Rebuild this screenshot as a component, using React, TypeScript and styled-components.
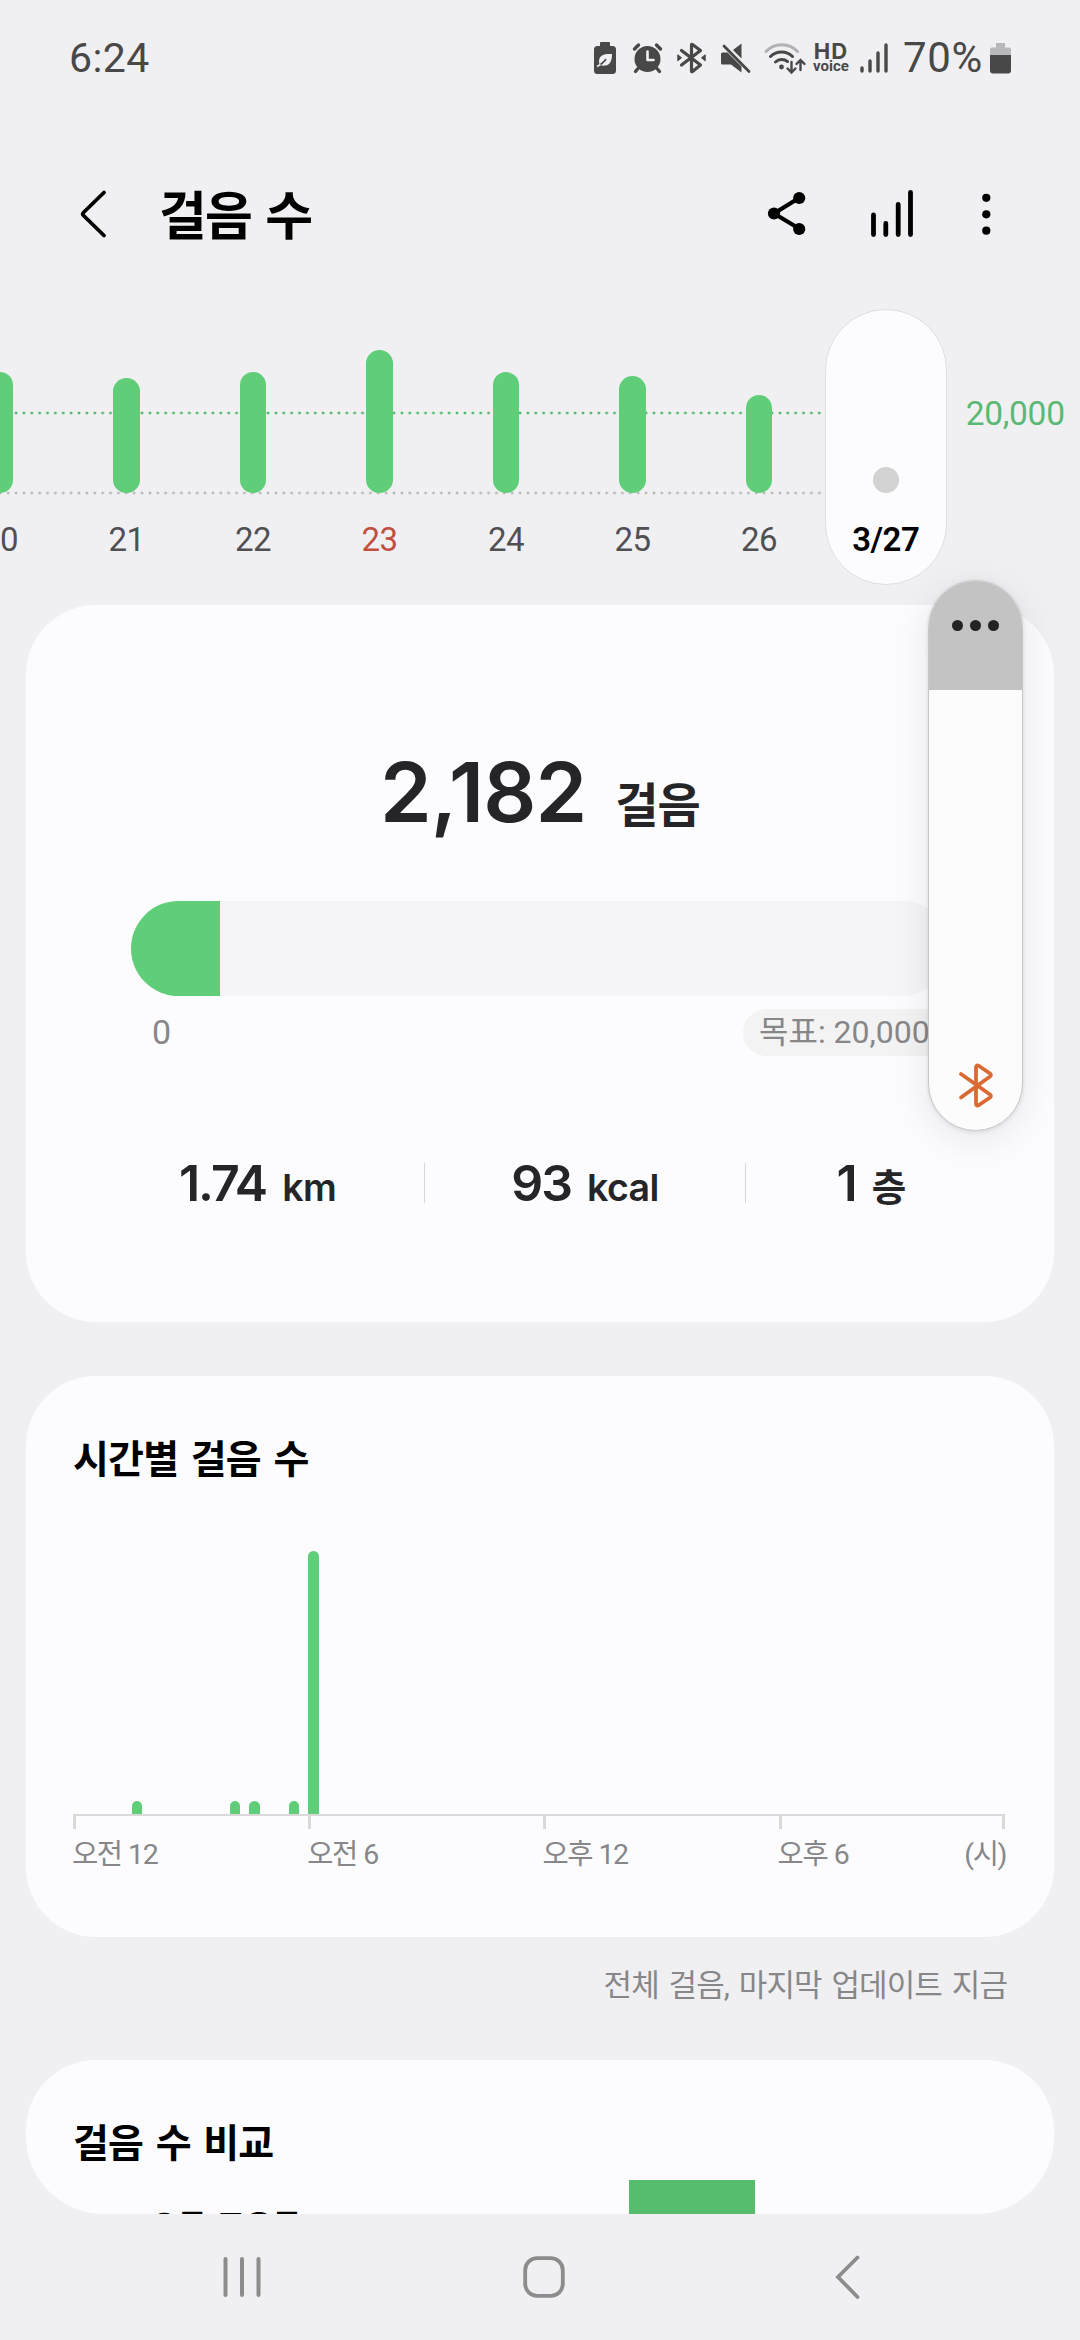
import React from "react";
import styled, { createGlobalStyle } from "styled-components";

const GREEN = "#60ce79";
const INK = "#252528";
const MUTED = "#878789";
const STATUS = "#484848";

const GlobalStyle = createGlobalStyle`
  * { box-sizing: border-box; }
  body { margin: 0; background: #f0f0f3; }
`;

const Screen = styled.div`
  position: relative;
  display: flex;
  flex-direction: column;
  width: 1080px;
  height: 2340px;
  overflow: hidden;
  background: #f0f0f3;
  color: ${INK};
  font-family: Roboto, "Noto Sans CJK KR", sans-serif;
  white-space: nowrap;
`;

const Icon = styled.svg`
  display: block;
  flex: none;
  overflow: visible;
`;

/* ---------- status bar ---------- */

const StatusBar = styled.header`
  display: flex;
  align-items: center;
  height: 116px;
  padding: 0 69px 0 69px;
  color: ${STATUS};
`;

const Clock = styled.span`
  font-size: 41px;
  line-height: 60px;
  letter-spacing: 0.4px;
  margin-right: auto;
`;

const StatusIcons = styled.div`
  display: flex;
  align-items: center;
`;

const Slot = styled.span<{ $gap: number }>`
  display: flex;
  margin-left: ${(p) => p.$gap}px;
`;

const HdVoice = styled.span`
  display: flex;
  flex-direction: column;
  align-items: center;
  width: 34px;
  margin-left: 8px;
  font-weight: 700;
`;

const Hd = styled.span`
  font-family: Inter, sans-serif;
  font-size: 22px;
  line-height: 17px;
  letter-spacing: 1.2px;
`;

const Voice = styled.span`
  font-size: 15px;
  line-height: 13px;
`;

const Percent = styled.span`
  width: 80px;
  margin-left: 15px;
  font-size: 42px;
  line-height: 60px;
  letter-spacing: 0.6px;
`;

/* ---------- title bar ---------- */

const TitleBar = styled.div`
  display: flex;
  align-items: center;
  height: 188px;
  padding: 8px 89px 0 80px;
`;

const PageTitle = styled.h1`
  margin: 5px auto 0 53px;
  color: #000;
  font-family: Inter, "Noto Sans CJK KR", sans-serif;
  font-size: 52px;
  font-weight: 700;
  line-height: 76px;
  letter-spacing: -1.9px;
  word-spacing: 4px;
`;

const Actions = styled.div`
  display: flex;
  align-items: center;
`;

/* ---------- daily strip ---------- */

const DailyChart = styled.section`
  display: flex;
  height: 301px;
  padding-top: 5px;
`;

const dots = (color: string) =>
  `radial-gradient(circle at center, ${color} 0, ${color} 1px, transparent 1.8px)`;

const Strip = styled.div`
  display: flex;
  flex: none;
  height: 276px;
  margin-left: -63.25px;
  background-image: ${dots("#4fba6c")}, ${dots("#b9b9bb")};
  background-size: 7.877px 4px;
  background-repeat: repeat-x;
  background-position: -3.65px 102px, -3.65px 182px;
`;

const Day = styled.div<{ $selected?: boolean }>`
  display: flex;
  flex-direction: column;
  align-items: center;
  width: ${(p) => (p.$selected ? 122 : 126.5)}px;
  height: 276px;
  margin-left: ${(p) => (p.$selected ? 2.5 : 0)}px;
  border: 1px solid ${(p) => (p.$selected ? "#dedee0" : "transparent")};
  border-radius: 61px;
  background: ${(p) => (p.$selected ? "#fcfcfe" : "transparent")};
`;

const BarArea = styled.div`
  display: flex;
  align-items: flex-end;
  height: 183px;
`;

const DayBar = styled.div<{ $empty?: boolean }>`
  width: 26.5px;
  border-radius: 13.25px;
  background: ${(p) => (p.$empty ? "#d2d2d2" : GREEN)};
`;

const DayLabel = styled.span<{ $tone: "day" | "sunday" | "selected" }>`
  margin-top: 26px;
  color: ${(p) =>
    p.$tone === "sunday" ? "#c2503f" : p.$tone === "selected" ? "#000" : "#505053"};
  font-size: 33px;
  font-weight: ${(p) => (p.$tone === "selected" ? 600 : 400)};
  line-height: 42px;
  letter-spacing: -0.5px;
`;

const GoalTick = styled.span`
  margin: 84px 0 0 19px;
  color: #5bb976;
  font-size: 33.5px;
  line-height: 42px;
  letter-spacing: -0.3px;
`;

/* ---------- cards ---------- */

const Card = styled.section<{ $height: number }>`
  flex: none;
  width: 1028px;
  height: ${(p) => p.$height}px;
  margin: 0 26px;
  border-radius: 70px;
  background: #fcfcfe;
  overflow: hidden;
`;

const SummaryCard = styled(Card)`
  padding: 137px 105px 0;
`;

const StepTotal = styled.div`
  display: flex;
  align-items: baseline;
  justify-content: center;
  height: 100px;
  font-family: Inter, "Noto Sans CJK KR", sans-serif;
  font-weight: 600;
  line-height: 100px;
`;

const StepCount = styled.span`
  font-size: 83px;
  letter-spacing: -0.9px;
`;

const StepUnit = styled.span`
  margin-left: 29px;
  font-size: 47px;
  letter-spacing: -0.9px;
`;

const Track = styled.div`
  height: 95px;
  margin-top: 59px;
  border-radius: 47.5px;
  background: #f5f5f8;
  overflow: hidden;
`;

const Fill = styled.div`
  height: 100%;
  background: ${GREEN};
`;

const Range = styled.div`
  display: flex;
  justify-content: space-between;
  height: 47px;
  margin-top: 13px;
  padding-left: 21px;
  color: ${MUTED};
  font-size: 34px;
  line-height: 47px;
`;

const GoalChip = styled.span`
  width: 206px;
  padding-left: 16px;
  border-radius: 24px;
  background: #f3f3f3;
  font-size: 32px;
`;

const Metrics = styled.div`
  display: grid;
  grid-template-columns: 334px 321px 250px;
  align-items: center;
  height: 80px;
  margin: 87px 0 0 -40px;
  font-family: Inter, "Noto Sans CJK KR", sans-serif;
  font-weight: 600;
`;

const Metric = styled.div<{ $divided?: boolean }>`
  display: flex;
  align-items: center;
  justify-content: center;
  height: 40px;
  border-right: ${(p) => (p.$divided ? "1px solid #d6d6d8" : "0")};
`;

const MetricText = styled.span`
  display: flex;
  align-items: baseline;
  padding-top: 4px;
  line-height: 80px;
`;

const MetricValue = styled.span`
  font-size: 50px;
  letter-spacing: -2px;
`;

const MetricUnit = styled.span`
  margin-left: 16px;
  font-size: 37.5px;
  letter-spacing: -0.6px;
`;

const TitledCard = styled(Card)`
  margin-top: 54px;
  padding: 53px 49px 0 47px;
`;

const CardTitle = styled.h2`
  margin: 0;
  padding-bottom: 2px;
  color: #000;
  font-family: Inter, "Noto Sans CJK KR", sans-serif;
  font-size: 39px;
  font-weight: 600;
  line-height: 60px;
  letter-spacing: -0.8px;
  word-spacing: 3.5px;
`;

/* ---------- hourly chart ---------- */

const HourPlot = styled.div`
  display: flex;
  align-items: flex-end;
  justify-content: space-between;
  height: 263px;
  margin-top: 60px;
`;

const HourBar = styled.div`
  width: 10.7px;
  border-radius: 5.4px 5.4px 0 0;
  background: ${GREEN};
`;

const Axis = styled.div`
  display: grid;
  grid-template-columns: repeat(3, 235.2px) 1fr;
  height: 15px;
  border-top: 2.5px solid #d9d9da;
  border-right: 3px solid #d9d9da;
`;

const Tick = styled.div`
  border-left: 3px solid #d9d9da;
`;

const HourLabels = styled.div`
  display: grid;
  grid-template-columns: repeat(3, 235.2px) 1fr auto;
  margin: 6px -1px 0 -1px;
  color: ${MUTED};
  font-size: 28.5px;
  line-height: 40px;
  letter-spacing: -1.4px;
  word-spacing: 0.8px;
`;

const Updated = styled.p`
  margin: 29px 73px 0 0;
  color: ${MUTED};
  font-size: 31px;
  line-height: 40px;
  letter-spacing: -0.9px;
  word-spacing: 3px;
  text-align: right;
`;

/* ---------- comparison ---------- */

const CompareCard = styled(TitledCard)`
  border-radius: 70px 70px 78px 78px;
`;

const CompareRow = styled.div`
  display: grid;
  grid-template-columns: 556px 126px;
  height: 100px;
  margin-top: 5px;
`;

const CompareName = styled.span`
  padding: 27px 0 0 77px;
  color: #000;
  font-size: 31px;
  font-weight: 700;
  line-height: 40px;
  letter-spacing: -0.4px;
  word-spacing: 3px;
`;

const CompareBar = styled.div`
  background: #56bc6e;
`;

/* ---------- system navigation ---------- */

const NavBar = styled.nav`
  display: flex;
  align-items: center;
  height: 126px;
  padding-left: 223px;
`;

/* ---------- floating edge panel ---------- */

const EdgePanel = styled.aside`
  position: absolute;
  top: 580px;
  left: 928px;
  display: flex;
  flex-direction: column;
  align-items: center;
  width: 95px;
  height: 551px;
  border: 1.5px solid #c7c7c9;
  border-radius: 47.5px;
  background: #fcfcfc;
  box-shadow: 0 8px 40px rgba(0, 0, 0, 0.09), 0 1px 4px rgba(0, 0, 0, 0.1);
  overflow: hidden;
`;

const PanelHandle = styled.div`
  display: flex;
  justify-content: center;
  gap: 7px;
  width: 100%;
  height: 109px;
  padding-top: 39px;
  background: #c3c3c3;
`;

const HandleDot = styled.i`
  width: 11.2px;
  height: 11.2px;
  border-radius: 50%;
  background: #232323;
`;

const PanelFooter = styled.div`
  margin: auto 0 22px;
`;

const days = [
  { label: "20", height: 121 },
  { label: "21", height: 115 },
  { label: "22", height: 121 },
  { label: "23", height: 143, tone: "sunday" as const },
  { label: "24", height: 121 },
  { label: "25", height: 117 },
  { label: "26", height: 98 },
  { label: "3/27", height: 26.5, tone: "selected" as const },
];

const halfHours: Record<number, number> = { 3: 13, 8: 13, 9: 13, 11: 13, 12: 263 };

const steps = 2182;
const goal = 20000;

export default function App() {
  return (
    <>
      <GlobalStyle />
      <Screen>
        <StatusBar>
          <Clock>6:24</Clock>
          <StatusIcons>
            <Slot $gap={0}>
              <Icon width="22" height="32" viewBox="0 0 22 32">
                <path d="M7 0h8q1 0 1 1v3h2.500q3.500 0 3.500 3.500v21q0 3.500-3.500 3.500h-15q-3.500 0-3.500-3.500v-21q0-3.500 3.500-3.500h2.500v-3q0-1 1-1z" fill={STATUS} />
                <path d="M18 12c-7-.5-13 1-13 7 0 2 .5 3 1 4 2 1 7 1 9-1 2.500-2.500 3-6 3-10z" fill="#f0f0f3" />
                <path d="M3.500 24c3-1 6-3.500 8.500-7" fill="none" stroke={STATUS} strokeWidth="1.600" />
                <path d="M3 24.500l3.500-2" stroke="#f0f0f3" strokeWidth="1.600" />
              </Icon>
            </Slot>
            <Slot $gap={17}>
              <Icon width="29" height="30" viewBox="0 0 29 30">
                <circle cx="14.500" cy="16" r="13" fill={STATUS} />
                <path d="M1.500 6l4-4M27.500 6l-4-4M5 25.500l-2.500 3M24 25.500l2.500 3" stroke={STATUS} strokeWidth="3.400" strokeLinecap="round" />
                <path d="M14.500 8.500v8.500h6" fill="none" stroke="#f0f0f3" strokeWidth="2.600" strokeLinecap="round" strokeLinejoin="round" />
              </Icon>
            </Slot>
            <Slot $gap={15}>
              <Icon width="29" height="32" viewBox="0 0 29 32">
                <path d="M4.500 8.500l19 14.500-8 6.500q-1 .7-1-.8v-25.400q0-1.500 1-.8l8 6-19 14.500" fill="none" stroke={STATUS} strokeWidth="3.200" strokeLinecap="round" strokeLinejoin="round" />
                <path d="M.8 12.800v6l3.700-3zM28.200 12.800v6l-3.700-3z" fill={STATUS} stroke={STATUS} strokeLinejoin="round" />
              </Icon>
            </Slot>
            <Slot $gap={15}>
              <Icon width="29" height="30" viewBox="0 0 29 30">
                <path d="M1.500 9.500h5l14 14v6l-10.500-8h-8.500q-1.500 0-1.500-1.500v-9q0-1.500 1.500-1.500zM20.500.5v15l-8.500-8.500z" fill={STATUS} />
                <path d="M3 3l25 25.500" stroke={STATUS} strokeWidth="2.800" strokeLinecap="round" />
              </Icon>
            </Slot>
            <Slot $gap={14}>
              <Icon width="42" height="32" viewBox="0 0 42 32">
                <g fill="none" strokeLinecap="round" strokeWidth="3">
                  <path d="M2 9.500a22 22 0 0 1 31.500 0" stroke="#b2b2b4" />
                  <path d="M6.500 14.500a16 16 0 0 1 22 0M11.500 20a9.500 9.500 0 0 1 12 -.5" stroke={STATUS} />
                  <path d="M27.500 20v10M23.500 26.500l4 4 4-4M36.500 28v-10M32.500 22l4-4 4 4" stroke={STATUS} strokeWidth="2.400" />
                </g>
                <circle cx="17.500" cy="25" r="2.400" fill={STATUS} />
              </Icon>
            </Slot>
            <HdVoice>
              <Hd>HD</Hd>
              <Voice>voice</Voice>
            </HdVoice>
            <Slot $gap={12}>
              <Icon width="28" height="30" viewBox="0 0 28 30">
                <path d="M2 25v3M10 18v10M18 10v18M26 2v26" stroke={STATUS} strokeWidth="3.400" strokeLinecap="round" />
              </Icon>
            </Slot>
            <Percent>70%</Percent>
            <Slot $gap={7}>
              <Icon width="21" height="31" viewBox="0 0 21 31">
                <path d="M6 0h9v4.500h4q2 0 2 2v5.500h-21v-5.500q0-2 2-2h4z" fill="#b8b8ba" />
                <path d="M0 12h21v15.500q0 3-3 3h-15q-3 0-3-3z" fill={STATUS} />
              </Icon>
            </Slot>
          </StatusIcons>
        </StatusBar>

        <TitleBar>
          <Icon width="26" height="48" viewBox="0 0 26 48">
            <path d="M24 2.500L3.500 22.500q-1.500 1.500 0 3L24 45.500" fill="none" stroke="#000" strokeWidth="3.800" strokeLinecap="round" />
          </Icon>
          <PageTitle>걸음 수</PageTitle>
          <Actions>
            <Slot $gap={0}>
              <Icon width="38" height="44" viewBox="0 0 38 44">
                <path d="M31 6L6 21.500L31 36.500" fill="none" stroke="#000" strokeWidth="4.200" />
                <circle cx="31.200" cy="6" r="6.100" />
                <circle cx="6" cy="21.500" r="6.100" />
                <circle cx="31.200" cy="37" r="6.100" />
              </Icon>
            </Slot>
            <Slot $gap={65}>
              <Icon width="42" height="48" viewBox="0 0 42 48">
                <path d="M2.500 25v19.500M14.800 33.500v11M27.200 14.500v30M39.500 2.500v42" stroke="#000" strokeWidth="4.800" strokeLinecap="round" />
              </Icon>
            </Slot>
            <Slot $gap={69}>
              <Icon width="9" height="42" viewBox="0 0 9 42">
                <circle cx="4.300" cy="4.800" r="4.100" />
                <circle cx="4.300" cy="21.300" r="4.100" />
                <circle cx="4.300" cy="37.700" r="4.100" />
              </Icon>
            </Slot>
          </Actions>
        </TitleBar>

        <DailyChart>
          <Strip>
            {days.map((d) => (
              <Day key={d.label} $selected={d.tone === "selected"}>
                <BarArea>
                  <DayBar $empty={d.tone === "selected"} style={{ height: d.height }} />
                </BarArea>
                <DayLabel $tone={d.tone ?? "day"}>{d.label}</DayLabel>
              </Day>
            ))}
          </Strip>
          <GoalTick>20,000</GoalTick>
        </DailyChart>

        <SummaryCard $height={717}>
          <StepTotal>
            <StepCount>2,182</StepCount>
            <StepUnit>걸음</StepUnit>
          </StepTotal>
          <Track>
            <Fill style={{ width: `${(steps / goal) * 100}%` }} />
          </Track>
          <Range>
            <span>0</span>
            <GoalChip>목표: 20,000</GoalChip>
          </Range>
          <Metrics>
            <Metric $divided>
              <MetricText>
                <MetricValue>1.74</MetricValue>
                <MetricUnit>km</MetricUnit>
              </MetricText>
            </Metric>
            <Metric $divided>
              <MetricText>
                <MetricValue>93</MetricValue>
                <MetricUnit>kcal</MetricUnit>
              </MetricText>
            </Metric>
            <Metric>
              <MetricText>
                <MetricValue>1</MetricValue>
                <MetricUnit>층</MetricUnit>
              </MetricText>
            </Metric>
          </Metrics>
        </SummaryCard>

        <TitledCard $height={561}>
          <CardTitle>시간별 걸음 수</CardTitle>
          <HourPlot>
            {Array.from({ length: 48 }, (_, i) => (
              <HourBar key={i} style={{ height: halfHours[i] ?? 0 }} />
            ))}
          </HourPlot>
          <Axis>
            <Tick />
            <Tick />
            <Tick />
            <Tick />
          </Axis>
          <HourLabels>
            <span>오전 12</span>
            <span>오전 6</span>
            <span>오후 12</span>
            <span>오후 6</span>
            <span>(시)</span>
          </HourLabels>
        </TitledCard>

        <Updated>전체 걸음, 마지막 업데이트 지금</Updated>

        <CompareCard $height={154}>
          <CardTitle>걸음 수 비교</CardTitle>
          <CompareRow>
            <CompareName>오류 모유류</CompareName>
            <CompareBar />
          </CompareRow>
        </CompareCard>

        <NavBar>
          <Icon width="38" height="42" viewBox="0 0 38 42">
            <path d="M2.500 3v36M19 3v36M35.500 3v36" stroke="#8c8c8c" strokeWidth="4" strokeLinecap="round" />
          </Icon>
          <Slot $gap={262}>
            <Icon width="42" height="42" viewBox="0 0 42 42">
              <rect x="2.200" y="2.200" width="37.600" height="37.600" rx="12" fill="none" stroke="#8c8c8c" strokeWidth="3.800" />
            </Icon>
          </Slot>
          <Slot $gap={270}>
            <Icon width="25" height="44" viewBox="0 0 25 44">
              <path d="M22.500 2.500L3 22L22.500 42" fill="none" stroke="#8c8c8c" strokeWidth="3.800" strokeLinecap="round" />
            </Icon>
          </Slot>
        </NavBar>

        <EdgePanel>
          <PanelHandle>
            <HandleDot />
            <HandleDot />
            <HandleDot />
          </PanelHandle>
          <PanelFooter>
            <Icon width="34" height="45" viewBox="0 0 34 45">
              <path d="M2 11l29 20.500q1.800 1.500 0 3l-11 7.500q-3 1.500-3-1.500v-36q0-3 3-1.500l11 7.500q1.800 1.500 0 3L2 34.500" fill="none" stroke="#da6a33" strokeWidth="3.800" strokeLinecap="round" strokeLinejoin="round" />
            </Icon>
          </PanelFooter>
        </EdgePanel>
      </Screen>
    </>
  );
}
